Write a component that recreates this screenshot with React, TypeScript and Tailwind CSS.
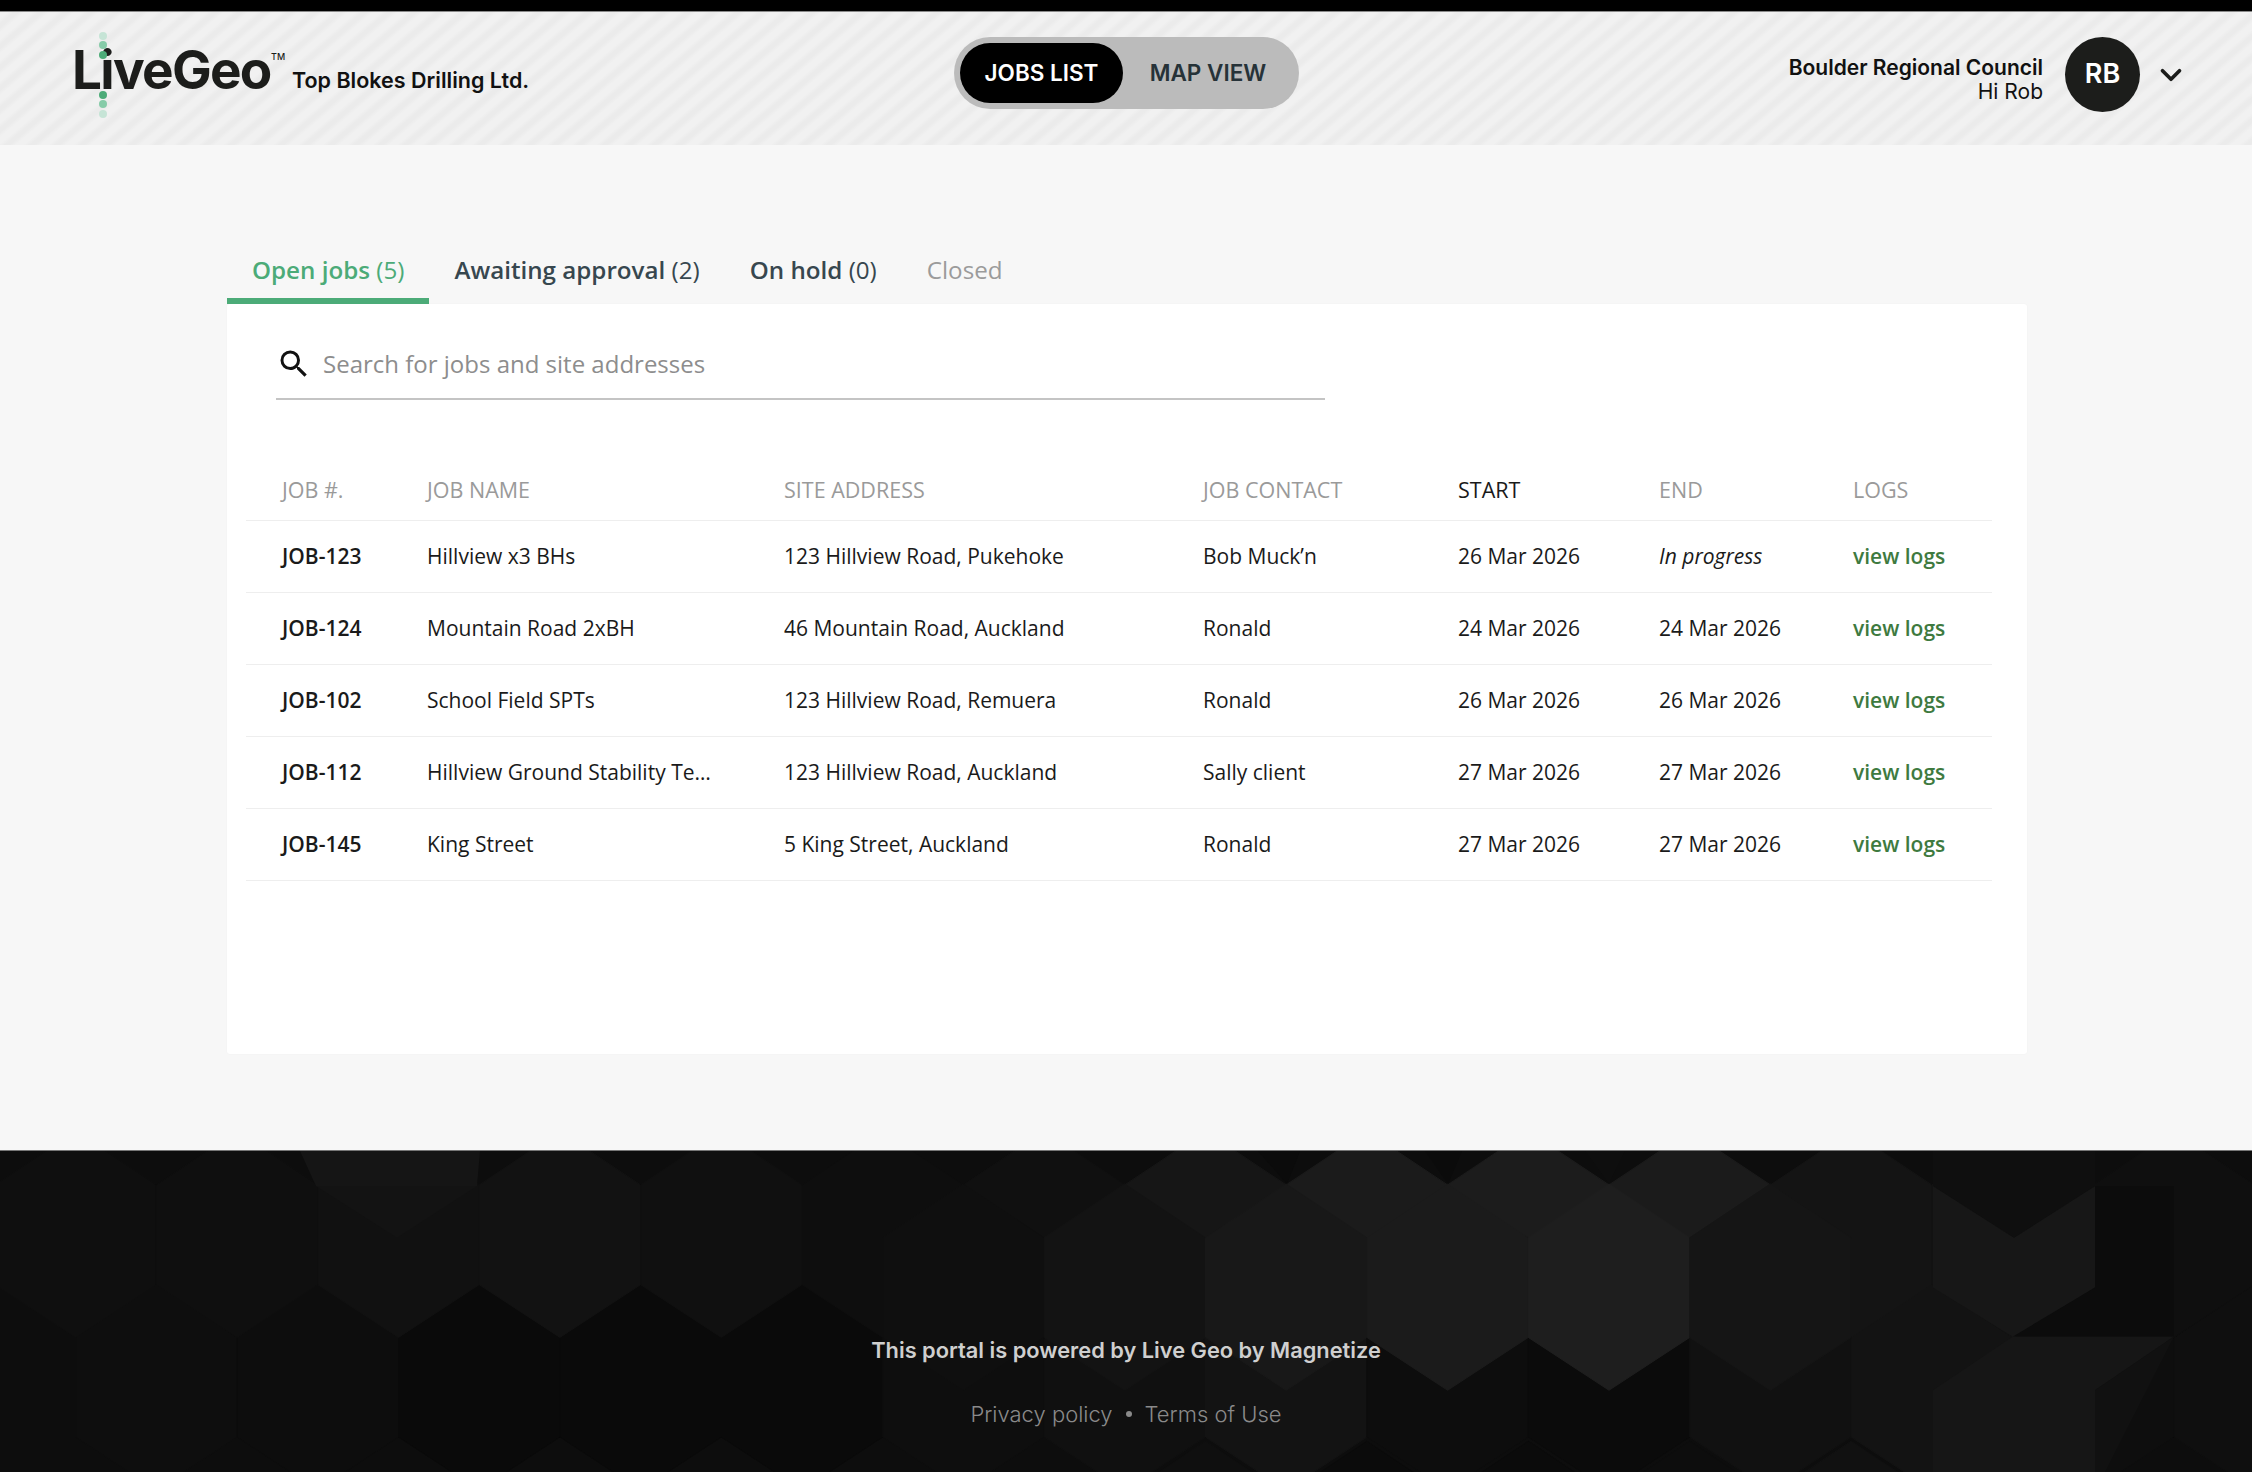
import React from 'react';
import { ChevronDown } from 'lucide-react';

const jobs = [
  { id: 'JOB-123', name: 'Hillview x3 BHs', site: '123 Hillview Road, Pukehoke', contact: 'Bob Muck’n', start: '26 Mar 2026', end: 'In progress' },
  { id: 'JOB-124', name: 'Mountain Road 2xBH', site: '46 Mountain Road, Auckland', contact: 'Ronald', start: '24 Mar 2026', end: '24 Mar 2026' },
  { id: 'JOB-102', name: 'School Field SPTs', site: '123 Hillview Road, Remuera', contact: 'Ronald', start: '26 Mar 2026', end: '26 Mar 2026' },
  { id: 'JOB-112', name: 'Hillview Ground Stability Te…', site: '123 Hillview Road, Auckland', contact: 'Sally client', start: '27 Mar 2026', end: '27 Mar 2026' },
  { id: 'JOB-145', name: 'King Street', site: '5 King Street, Auckland', contact: 'Ronald', start: '27 Mar 2026', end: '27 Mar 2026' },
];

const gridCols = 'grid grid-cols-[145px_357px_419px_255px_201px_194px_175px]';

// footer background: overlapping rows of hexagons, colours read off the reference
const hex = (n: number, top: number) => {
  const cx = 1609 + 80.7 * (n - 16);
  const w = 80.7;
  return `${cx},${top} ${cx + w},${top + 54} ${cx + w},${top + 154} ${cx},${top + 207} ${cx - w},${top + 154} ${cx - w},${top + 54}`;
};

const lowerRow: [number, string][] = [
  [-2, '#0e0e0e'], [0, '#0d0d0d'], [2, '#0a0a0a'], [4, '#0a0a0a'], [6, '#0a0a0a'], [8, '#0e0e0e'], [10, '#101010'],
  [12, '#131313'], [14, '#0d0d0d'], [16, '#0b0b0b'], [18, '#111111'], [20, '#131313'], [22, '#0e0e0e'], [24, '#0f0f0f'], [26, '#0f0f0f'],
];
const upperRow: [number, string][] = [
  [-3, '#0f0f0f'], [-1, '#0f0f0f'], [1, '#111111'], [3, '#121212'], [5, '#101010'], [7, '#0e0e0e'], [9, '#101010'], [11, '#161616'],
  [13, '#1b1b1b'], [15, '#1c1c1c'], [17, '#1b1b1b'], [19, '#141414'], [21, '#131313'], [23, '#0f0f0f'], [25, '#101010'],
];
const middleRow: [number, string][] = [
  [8, '#0f0f0f'], [10, '#131313'], [12, '#181818'], [14, '#1b1b1b'], [16, '#1e1e1e'], [18, '#151515'],
];
const bottomRow: [number, string][] = [
  [11, '#0f0f0f'], [13, '#0b0b0b'], [15, '#0b0b0b'], [17, '#0d0d0d'], [19, '#111111'],
];

const HexRow = ({ row, top }: { row: [number, string][]; top: number }) => (
  <>
    {row.map(([n, c]) => <polygon key={n} points={hex(n, top)} fill={c} stroke={c} strokeWidth={1} />)}
  </>
);

const FooterPattern = () => (
  <svg className="absolute inset-0 h-full w-full" viewBox="0 1150 2252 322" preserveAspectRatio="none">
    <rect x="0" y="1150" width="2252" height="322" fill="#0d0d0d" />
    <HexRow row={lowerRow} top={1283} />
    <HexRow row={upperRow} top={1130} />
    <HexRow row={middleRow} top={1183} />
    <HexRow row={bottomRow} top={1441} />
    <polygon points="300,1150 480,1150 477,1185 316,1185" fill="#151515" />
    <polygon points="316,1185 477,1185 397,1237" fill="#131313" />
    <polygon points="1258,1150 1287,1183 1300,1150" fill="#0b0b0b" />
    <polygon points="1425,1150 1448,1183 1462,1150" fill="#0b0b0b" />
    <polygon points="1585,1150 1609,1183 1625,1150" fill="#0e0e0e" />
    <polygon points="1933,1185 2014,1237 2095,1185 2095,1287 2014,1337 1933,1287" fill="#171717" />
    <polygon points="1933,1150 2095,1150 2095,1185 2014,1237 1933,1185" fill="#0f0f0f" />
    <polygon points="2013,1336 2174,1336 2095,1390 2095,1472 1933,1472 1933,1390" fill="#161616" />
    <polygon points="2013,1336 2095,1287 2095,1185 2174,1185 2174,1336" fill="#0c0c0c" />
    <polygon points="2174,1336 2095,1390 2095,1472 2105,1472" fill="#111111" />
  </svg>
);

const Logo = () => (
  <div className="relative h-[94px] w-[217px] shrink-0">
    <span className="absolute -left-[3px] top-[12px] text-[53px] leading-[53px] font-bold tracking-[-1.7px] text-[#1c1d1b] [font-family:Inter,sans-serif]">
      LiveGeo
    </span>
    <span className="absolute left-[196px] top-[20px] text-[9px] leading-[9px] font-medium text-[#1c1d1b]">TM</span>
    {/* the green dots above and below the i */}
    <div className="absolute left-[24px] top-0 flex flex-col gap-[1.5px]">
      <span className="h-[8px] w-[8px] rounded-full bg-[#c6e4d6]" />
      <span className="h-[8px] w-[8px] rounded-full bg-[#86cba8]" />
      <span className="h-[8px] w-[8px] rounded-full bg-[#4cab78]" />
    </div>
    <div className="absolute left-[24px] top-[59px] flex flex-col gap-[1.5px]">
      <span className="h-[8px] w-[8px] rounded-full bg-[#4cab78]" />
      <span className="h-[8px] w-[8px] rounded-full bg-[#86cba8]" />
      <span className="h-[8px] w-[8px] rounded-full bg-[#c6e4d6]" />
    </div>
  </div>
);

const SearchIcon = () => (
  <svg className="h-[36px] w-[36px] shrink-0 text-[#111111]" viewBox="0 0 24 24" fill="currentColor">
    <path d="M15.5 14h-.79l-.28-.27A6.471 6.471 0 0 0 16 9.5 6.5 6.5 0 1 0 9.5 16c1.61 0 3.09-.59 4.23-1.57l.27.28v.79l5 4.99L20.49 19l-4.99-5zm-6 0C7.01 14 5 11.99 5 9.5S7.01 5 9.5 5 14 7.01 14 9.5 11.99 14 9.5 14z" />
  </svg>
);

export default function App() {
  return (
    <div className="flex min-h-screen flex-col bg-[#f7f7f7] [font-family:'Open_Sans',sans-serif]">
      <div className="h-[12px] border-b border-[#8a8a8a] bg-black" />

      <header className="flex h-[133px] items-center justify-between bg-[#eeeeee] bg-[repeating-linear-gradient(140deg,#f1f1f1_0px,#f1f1f1_5px,#ebebeb_9px,#ebebeb_12px,#f1f1f1_16px)] pl-[75px] pr-[64px] [font-family:Inter,sans-serif]">
        <div className="flex w-[500px] items-start">
          <Logo />
          <span className="mt-[34px] text-[21.5px] leading-[28px] font-semibold whitespace-nowrap text-[#111111]">Top Blokes Drilling Ltd.</span>
        </div>

        <div className="mb-[11px] flex h-[72px] w-[345px] items-center rounded-full bg-[#bbbbbb] p-[6px]">
          <div className="flex h-[60px] w-[163px] items-center justify-center rounded-full bg-black text-[22.5px] font-semibold text-white">JOBS LIST</div>
          <div className="flex flex-1 items-center justify-center text-[22.5px] font-semibold text-[#263238]">MAP VIEW</div>
        </div>

        <div className="mb-[8px] flex w-[510px] items-center justify-end">
          <div className="mt-[10px] text-right text-[#111111]">
            <div className="text-[21px] leading-[24px] font-semibold whitespace-nowrap">Boulder Regional Council</div>
            <div className="text-[21px] leading-[24px]">Hi Rob</div>
          </div>
          <div className="ml-[22px] flex h-[75px] w-[75px] items-center justify-center rounded-full bg-[#1c1d1b] text-[27px] font-semibold text-white">RB</div>
          <ChevronDown className="ml-[14px] h-[34px] w-[34px] text-[#1c1d1b]" strokeWidth={2.6} />
        </div>
      </header>

      <main className="flex-1 pl-[227px] pr-[225px] pt-[113px]">
        <nav className="flex h-[46px] items-start text-[24.2px] leading-[24px] font-[550]">
          <div className="h-[46px] border-b-[6px] border-[#4cab78] px-[25px] text-[#4cab78]">
            Open jobs <span className="font-normal">(5)</span>
          </div>
          <div className="px-[25px] text-[#37474f]">
            Awaiting approval <span className="font-normal">(2)</span>
          </div>
          <div className="px-[25px] text-[#37474f]">
            On hold <span className="font-normal">(0)</span>
          </div>
          <div className="px-[25px] font-normal text-[#9b9b9b]">Closed</div>
        </nav>

        <section className="h-[750px] rounded-[3px] bg-white px-[19px] pt-[34px] shadow-[0_0_2px_rgba(0,0,0,0.04)]">
          <div className="ml-[30px] flex h-[62px] w-[1049px] items-center gap-[11px] border-b-2 border-[#c4c4c4] pb-[9px]">
            <SearchIcon />
            <span className="text-[24px] text-[#8d8d8d]">Search for jobs and site addresses</span>
          </div>

          <div className="mt-[61px] w-[1746px]">
            <div className={`${gridCols} h-[60px] items-center border-b border-[#eeeeee] text-[21.5px] font-medium text-[#9a9a9a]`}>
              <div className="pl-[36px]">JOB #.</div>
              <div className="pl-[36px]">JOB NAME</div>
              <div className="pl-[36px]">SITE ADDRESS</div>
              <div className="pl-[36px]">JOB CONTACT</div>
              <div className="pl-[36px] text-[#1a1a1a]">START</div>
              <div className="pl-[36px]">END</div>
              <div className="pl-[36px]">LOGS</div>
            </div>
            {jobs.map((job) => (
              <div key={job.id} className={`${gridCols} h-[72px] items-center border-b border-[#eeeeee] text-[21px] text-[#1a1a1a]`}>
                <div className="pl-[36px] font-semibold">{job.id}</div>
                <div className="pl-[36px]">{job.name}</div>
                <div className="pl-[36px]">{job.site}</div>
                <div className="pl-[36px]">{job.contact}</div>
                <div className="pl-[36px]">{job.start}</div>
                <div className={job.end === 'In progress' ? 'pl-[36px] italic' : 'pl-[36px]'}>{job.end}</div>
                <div className="pl-[36px] font-semibold text-[#3e7a3f]">view logs</div>
              </div>
            ))}
          </div>
        </section>
      </main>

      <footer className="relative mt-[96px] h-[322px] border-t border-[#777777] [font-family:Inter,sans-serif]">
        <FooterPattern />
        <div className="relative flex flex-col items-center pt-[184px]">
          <p className="text-[21.8px] leading-[30px] font-semibold text-[#cfcfcf]">This portal is powered by Live Geo by Magnetize</p>
          <div className="mt-[34px] flex items-center gap-[13px] text-[22px] leading-[30px] font-light text-[#8a8a8a]">
            <span>Privacy policy</span>
            <span className="h-[6px] w-[6px] rounded-full bg-[#8a8a8a]" />
            <span>Terms of Use</span>
          </div>
        </div>
      </footer>
    </div>
  );
}
